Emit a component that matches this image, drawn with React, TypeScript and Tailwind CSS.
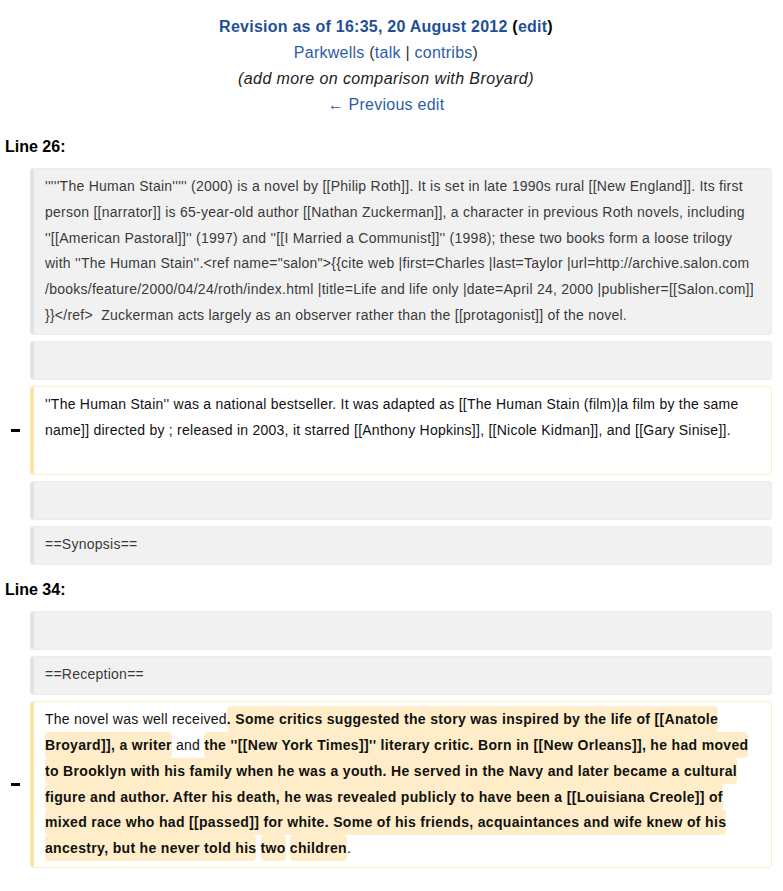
import React from 'react';

const font = { fontFamily: '"Liberation Sans", Arial, sans-serif' };

function Context({ children }: { children?: React.ReactNode }) {
  return (
    <div className="flex">
      <div className="w-[30px] shrink-0" />
      <div className="flex-1 min-h-[39px] rounded-[4px] border border-[#ececec] border-l-4 border-l-[#e3e3e3] bg-[#f1f1f1] pl-[11px] pr-[12px] py-[5px] text-[14px] tracking-[0.25px] leading-[25.8px] text-[#3a3a3a]">
        {children}
      </div>
    </div>
  );
}

function Deleted({ children }: { children?: React.ReactNode }) {
  return (
    <div className="flex">
      <div className="w-[30px] shrink-0 flex items-center justify-center">
        <span className="block w-[9px] h-[3px] bg-black" />
      </div>
      <div className="flex-1 rounded-[4px] border border-[#fbefc9] border-l-4 border-l-[#fde6a5] bg-white pl-[11px] pr-[12px] py-[5px] text-[14px] tracking-[0.25px] leading-[25.8px] text-[#111]">
        {children}
      </div>
    </div>
  );
}

function Del({ children }: { children: React.ReactNode }) {
  return (
    <span className="font-bold tracking-[0.33px] bg-[#feedc8] rounded-[4px] py-[5px] [box-decoration-break:clone]">{children}</span>
  );
}

export default function App() {
  return (
    <div className="bg-white w-[783px] min-h-[891px] pt-[14px] pr-[11px]" style={font}>
      {/* Revision header */}
      <div className="text-center text-[16px] leading-[26px] tracking-[0.25px]">
        <div className="font-bold text-[#1f4f97]">
          Revision as of 16:35, 20 August 2012 <span className="text-black">(</span>edit<span className="text-black">)</span>
        </div>
        <div className="text-[#2d5da8]">
          Parkwells <span className="text-[#333]">(</span>talk <span className="text-[#333]">|</span> contribs<span className="text-[#333]">)</span>
        </div>
        <div className="italic tracking-[0.4px] text-[#222]">(add more on comparison with Broyard)</div>
        <div className="text-[#2d5da8]">← Previous edit</div>
      </div>

      {/* Line 26 */}
      <div className="pl-[5px] mt-[19px] mb-[11px] text-[16px] leading-[20px] font-bold text-black">Line 26:</div>
      <div className="flex flex-col gap-[6px]">
        <Context>
          '''''The Human Stain''''' (2000) is a novel by [[Philip Roth]]. It is set in late 1990s rural [[New England]]. Its first person [[narrator]] is 65-year-old author [[Nathan Zuckerman]], a character in previous Roth novels, including ''[[American Pastoral]]'' (1997) and ''[[I Married a Communist]]'' (1998); these two books form a loose trilogy with ''The Human Stain''.&lt;ref name="salon"&gt;{'{{'}cite web |first=Charles |last=Taylor |url=http://archive.salon.com /books/feature/2000/04/24/roth/index.html |title=Life and life only |date=April 24, 2000 |publisher=[[Salon.com]] {'}}'}&lt;/ref&gt;&nbsp; Zuckerman acts largely as an observer rather than the [[protagonist]] of the novel.
        </Context>
        <Context />
        <Deleted>
          ''The Human Stain'' was a national bestseller. It was adapted as [[The Human Stain (film)|a film by the same name]] directed by ; released in 2003, it starred [[Anthony Hopkins]], [[Nicole Kidman]], and [[Gary Sinise]].
          <br />
          &nbsp;
        </Deleted>
        <Context />
        <Context>==Synopsis==</Context>
      </div>

      {/* Line 34 */}
      <div className="pl-[5px] mt-[15px] mb-[11px] text-[16px] leading-[20px] font-bold text-black">Line 34:</div>
      <div className="flex flex-col gap-[6px]">
        <Context />
        <Context>==Reception==</Context>
        <Deleted>
          The novel was well received<Del>. Some critics suggested the story was inspired by the life of [[Anatole Broyard]], a writer</Del> and <Del>the ''[[New York Times]]'' literary critic. Born in [[New Orleans]], he had moved to Brooklyn with his family when he was a youth. He served in the Navy and later became a cultural figure and author. After his death, he was revealed publicly to have been a [[Louisiana Creole]] of mixed race who had [[passed]] for white. Some of his friends, acquaintances and wife knew of his ancestry, but he never told his</Del> <Del>two</Del> <Del>children</Del>.
        </Deleted>
      </div>
    </div>
  );
}
